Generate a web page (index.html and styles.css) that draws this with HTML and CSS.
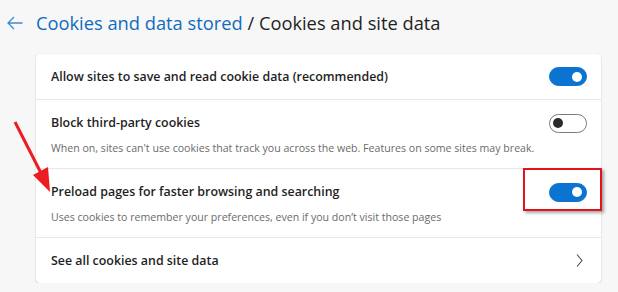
FILE: index.html
```html
<!DOCTYPE html>
<html lang="en">
<head>
  <meta charset="UTF-8">
  <title>Cookies and site data</title>
  <link rel="stylesheet" href="styles.css">
</head>
<body>

  <header class="page-head">
    <svg class="back" width="16" height="14" viewBox="0 0 16 14">
      <path d="M7 1 L1 7 L7 13 M1 7 H15.5" fill="none" stroke="#3d8ad6" stroke-width="1.3"/>
    </svg>
    <h1><a href="#">Cookies and data stored</a> / Cookies and site data</h1>
  </header>

  <div class="card">
    <div class="row row-single">
      <span class="label">Allow sites to save and read cookie data (recommended)</span>
      <span class="toggle on"></span>
    </div>

    <div class="row">
      <div class="row-head">
        <span class="label">Block third-party cookies</span>
        <span class="toggle"></span>
      </div>
      <div class="desc">When on, sites can't use cookies that track you across the web. Features on some sites may break.</div>
    </div>

    <div class="row">
      <div class="row-head">
        <span class="label">Preload pages for faster browsing and searching</span>
        <span class="toggle on"></span>
      </div>
      <div class="desc">Uses cookies to remember your preferences, even if you don’t visit those pages</div>
    </div>

    <div class="row row-single row-link">
      <span class="label">See all cookies and site data</span>
      <svg class="chevron" width="7" height="13" viewBox="0 0 7 13">
        <path d="M1 0.5 L6 6.5 L1 12.5" fill="none" stroke="#4a4a4a" stroke-width="1.1"/>
      </svg>
    </div>
  </div>

  <!-- annotations drawn over the screenshot -->
  <svg class="pointer" width="60" height="200" viewBox="0 0 60 200">
    <line x1="15" y1="122" x2="42" y2="175" stroke="#ec1c24" stroke-width="3"/>
    <polygon points="33,175 48,167 50,192" fill="#ec1c24"/>
  </svg>
  <div class="highlight"></div>

</body>
</html>
```
FILE: styles.css
```css
body {
  font-family: "Open Sans", "Noto Sans", sans-serif;
  background-color: #f7f7f7;
  color: #1f1f1f;
  margin: 0;
  padding: 0;
  position: relative;
}

.page-head {
  display: flex;
  align-items: center;
  height: 24px;
  padding-top: 11px;
}

.back {
  margin-left: 7px;
}

h1 {
  margin: 0 0 0 13px;
  font-size: 18.3px;
  font-weight: 400;
  line-height: 24px;
  color: #1f1f1f;
}

h1 a {
  color: #0f6cbd;
  text-decoration: none;
}

.card {
  width: 565px;
  margin: 19px 0 0 36px;
  background-color: white;
  border-radius: 4px;
  box-shadow: 0 1px 2px rgba(0, 0, 0, 0.16), 0 0 1px rgba(0, 0, 0, 0.12);
}

.row {
  padding: 14px 14px 12px 15px;
  border-top: 1px solid #e8e8e8;
}

.row:first-child {
  border-top: none;
}

.row-single {
  display: flex;
  align-items: center;
  justify-content: space-between;
  height: 45px;
  padding-top: 0;
  padding-bottom: 0;
  box-sizing: border-box;
}

.row-link {
  height: 46px;
}

.row-head {
  display: flex;
  align-items: center;
  justify-content: space-between;
  height: 18px;
}

.label {
  font-size: 12.4px;
  font-weight: 600;
  line-height: 18px;
}

.desc {
  margin-top: 8px;
  font-size: 10.6px;
  line-height: 16px;
  color: #6b6b6b;
}

.toggle {
  position: relative;
  width: 38px;
  height: 19px;
  box-sizing: border-box;
  border: 1px solid #7a7a7a;
  border-radius: 10px;
  background-color: white;
}

.toggle::after {
  content: "";
  position: absolute;
  left: 3px;
  top: 3.5px;
  width: 10px;
  height: 10px;
  border-radius: 50%;
  background-color: #2b2b2b;
}

.toggle.on {
  border-color: #0a74d0;
  background-color: #0a74d0;
}

.toggle.on::after {
  left: auto;
  right: 4px;
  background-color: white;
}

.chevron {
  margin-right: 4px;
}

.pointer {
  position: absolute;
  left: 0;
  top: 0;
}

.highlight {
  position: absolute;
  left: 523px;
  top: 168px;
  width: 79px;
  height: 43px;
  box-sizing: border-box;
  border: 2px solid #e3131b;
  box-shadow: 2px 2px 3px rgba(0, 0, 0, 0.35);
}
```
